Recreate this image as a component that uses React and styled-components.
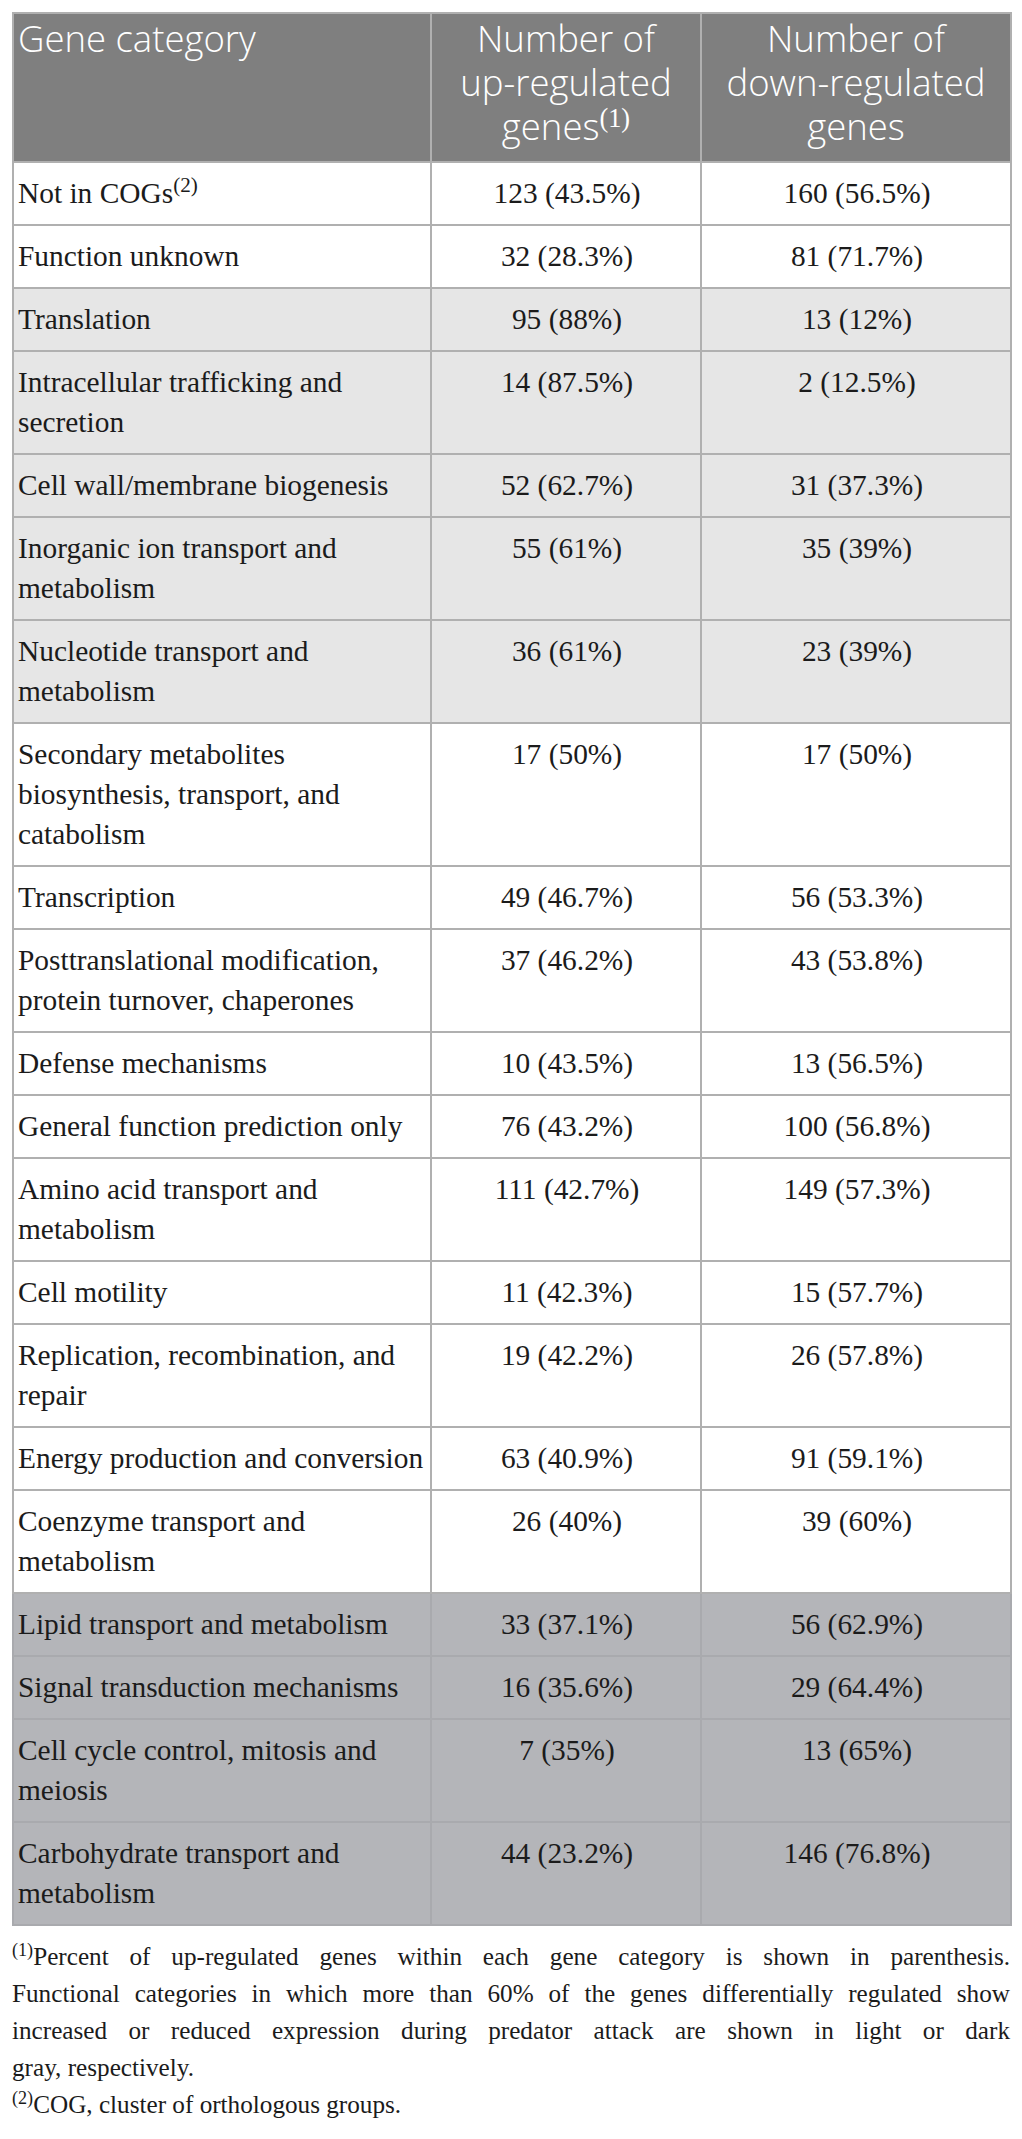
import React from 'react';
import styled, { createGlobalStyle, css } from 'styled-components';

const GlobalStyle = createGlobalStyle`
  body {
    margin: 0;
    background: #fff;
  }
`;

const tones = {
  white: '#ffffff',
  light: '#e6e6e6',
  dark: '#b4b5b9',
};

const Page = styled.div`
  padding: 12px 12px 0;
  width: 998px;
`;

const Table = styled.table`
  width: 998px;
  border-collapse: collapse;
  table-layout: fixed;
`;

const HeadCell = styled.th`
  background: #7f7f7f;
  color: #fff;
  font-family: 'Open Sans', 'Liberation Sans', sans-serif;
  font-weight: 300;
  font-size: 36.5px;
  line-height: 44px;
  padding: 2px 4px 13px;
  vertical-align: top;
  text-align: ${(p) => p.$align || 'left'};
  border: 2px solid #b0b0b0;
`;

const Cell = styled.td`
  background: ${(p) => tones[p.$tone]};
  color: #1b1b1b;
  font-family: 'Liberation Serif', 'Times New Roman', serif;
  font-size: 29.4px;
  line-height: 40px;
  padding: 10px 2px 11px 4px;
  vertical-align: top;
  text-align: ${(p) => p.$align || 'left'};
  border: 2px solid ${(p) => (p.$tone === 'dark' ? '#a9aaae' : '#b0b0b0')};
`;

const Sup = styled.sup`
  font-family: 'Liberation Serif', 'Times New Roman', serif;
  font-size: 0.72em;
  line-height: 0;
  vertical-align: 0.5em;
`;

const Notes = styled.div`
  margin-top: 12px;
  color: #1b1b1b;
  font-family: 'Liberation Serif', 'Times New Roman', serif;
  font-size: 25.2px;
  line-height: 37px;
`;

const NoteLine = styled.div`
  text-align: justify;
  ${(p) =>
    p.$fill &&
    css`
      text-align-last: justify;
    `}
`;

const rows = [
  { cat: <>Not in COGs<Sup>(2)</Sup></>, up: '123 (43.5%)', down: '160 (56.5%)', tone: 'white' },
  { cat: 'Function unknown', up: '32 (28.3%)', down: '81 (71.7%)', tone: 'white' },
  { cat: 'Translation', up: '95 (88%)', down: '13 (12%)', tone: 'light' },
  { cat: 'Intracellular trafficking and secretion', up: '14 (87.5%)', down: '2 (12.5%)', tone: 'light' },
  { cat: 'Cell wall/membrane biogenesis', up: '52 (62.7%)', down: '31 (37.3%)', tone: 'light' },
  { cat: 'Inorganic ion transport and metabolism', up: '55 (61%)', down: '35 (39%)', tone: 'light' },
  { cat: 'Nucleotide transport and metabolism', up: '36 (61%)', down: '23 (39%)', tone: 'light' },
  { cat: 'Secondary metabolites biosynthesis, transport, and catabolism', up: '17 (50%)', down: '17 (50%)', tone: 'white' },
  { cat: 'Transcription', up: '49 (46.7%)', down: '56 (53.3%)', tone: 'white' },
  { cat: 'Posttranslational modification, protein turnover, chaperones', up: '37 (46.2%)', down: '43 (53.8%)', tone: 'white' },
  { cat: 'Defense mechanisms', up: '10 (43.5%)', down: '13 (56.5%)', tone: 'white' },
  { cat: 'General function prediction only', up: '76 (43.2%)', down: '100 (56.8%)', tone: 'white' },
  { cat: 'Amino acid transport and metabolism', up: '111 (42.7%)', down: '149 (57.3%)', tone: 'white' },
  { cat: 'Cell motility', up: '11 (42.3%)', down: '15 (57.7%)', tone: 'white' },
  { cat: 'Replication, recombination, and repair', up: '19 (42.2%)', down: '26 (57.8%)', tone: 'white' },
  { cat: 'Energy production and conversion', up: '63 (40.9%)', down: '91 (59.1%)', tone: 'white' },
  { cat: 'Coenzyme transport and metabolism', up: '26 (40%)', down: '39 (60%)', tone: 'white' },
  { cat: 'Lipid transport and metabolism', up: '33 (37.1%)', down: '56 (62.9%)', tone: 'dark' },
  { cat: 'Signal transduction mechanisms', up: '16 (35.6%)', down: '29 (64.4%)', tone: 'dark' },
  { cat: 'Cell cycle control, mitosis and meiosis', up: '7 (35%)', down: '13 (65%)', tone: 'dark' },
  { cat: 'Carbohydrate transport and metabolism', up: '44 (23.2%)', down: '146 (76.8%)', tone: 'dark' },
];

export default function App() {
  return (
    <Page>
      <GlobalStyle />
      <Table>
        <colgroup>
          <col style={{ width: 418 }} />
          <col style={{ width: 270 }} />
          <col style={{ width: 310 }} />
        </colgroup>
        <thead>
          <tr>
            <HeadCell>Gene category</HeadCell>
            <HeadCell $align="center">
              Number of
              <br />
              up-regulated
              <br />
              genes<Sup>(1)</Sup>
            </HeadCell>
            <HeadCell $align="center">
              Number of
              <br />
              down-regulated
              <br />
              genes
            </HeadCell>
          </tr>
        </thead>
        <tbody>
          {rows.map((r, i) => (
            <tr key={i}>
              <Cell $tone={r.tone}>{r.cat}</Cell>
              <Cell $tone={r.tone} $align="center">{r.up}</Cell>
              <Cell $tone={r.tone} $align="center">{r.down}</Cell>
            </tr>
          ))}
        </tbody>
      </Table>
      <Notes>
        <NoteLine $fill>
          <Sup>(1)</Sup>Percent of up-regulated genes within each gene category is shown in parenthesis.
        </NoteLine>
        <NoteLine $fill>
          Functional categories in which more than 60% of the genes differentially regulated show
        </NoteLine>
        <NoteLine $fill>
          increased or reduced expression during predator attack are shown in light or dark
        </NoteLine>
        <NoteLine>gray, respectively.</NoteLine>
        <NoteLine>
          <Sup>(2)</Sup>COG, cluster of orthologous groups.
        </NoteLine>
      </Notes>
    </Page>
  );
}
